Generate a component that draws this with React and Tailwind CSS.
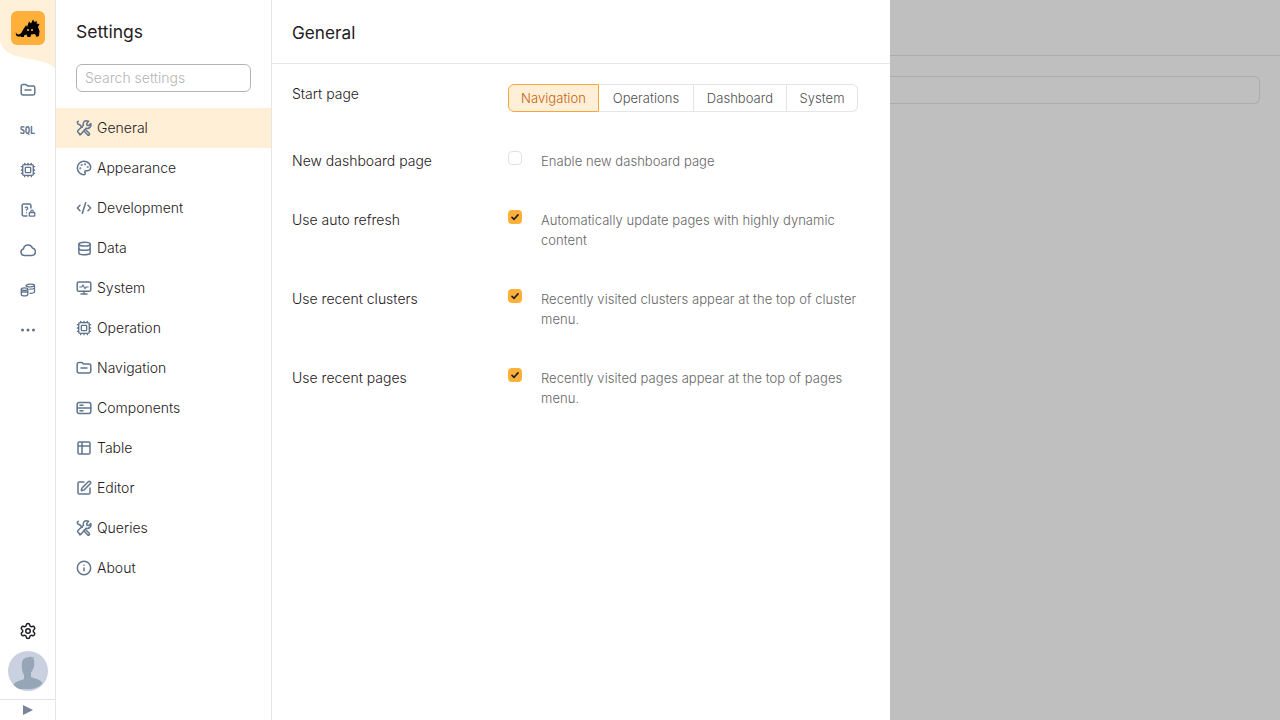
import React from "react";
import { Palette, CodeXml, Database, Cpu, Table2, SquarePen, Info, Settings } from "lucide-react";

const font = { fontFamily: '"Inter", "Liberation Sans", sans-serif' };
const sw = 2.25;

function S({ children, size = 16, className = "" }) {
  return (
    <svg width={size} height={size} viewBox="0 0 16 16" fill="none" stroke="currentColor" strokeWidth="1.5" strokeLinecap="round" strokeLinejoin="round" className={className}>
      {children}
    </svg>
  );
}

const FolderI = () => (
  <S>
    <path d="M1.2 4.2c0-1 .8-1.7 1.7-1.7h2.6c.6 0 1 .3 1.3.7l.5.7h5.8c1 0 1.7.7 1.7 1.7v5.7c0 1-.8 1.7-1.7 1.7H2.9c-1 0-1.7-.8-1.7-1.7z" />
    <path d="M5 8h6" />
  </S>
);
const ToolsI = () => (
  <S>
    <path d="M2.3 1.2 1.2 2.3l.8 2 1.6.3 2.6 2.6" />
    <path d="M4.500 14.600 2 12.200c-.5-.6-.5-1.200 0-1.700l5.400-5.300c-.3-1.500-.1-3 1-4C9.700.600 11.200.700 12.600 1.300L10.700 3.500l.3 1.800 1.700.3 2-2c.5 1.300.3 2.700-.8 3.800-1 1-2.500 1.200-3.900.9l-5.300 6.100c-.3.300-.700.500-1.200.200" />
    <path d="m9.700 9.700 3.500 3.500c.5.500.5 1.200 0 1.600-.5.400-1.100.400-1.600 0l-3.400-3.500" />
  </S>
);
const MonitorI = () => (
  <S>
    <rect x="1.200" y="2" width="13.600" height="9.300" rx="1.600" />
    <path d="M8 11.300V14M5 14h6" />
    <path d="M3.700 7h2l1.200-2 2 3.500L10.200 7h2" strokeWidth="1.200" />
  </S>
);
const ComponentsI = () => (
  <S>
    <rect x="1.200" y="2.500" width="13.600" height="11" rx="2" />
    <path d="M1.200 8h13.600M4 5.300h3M4 10.800h3" />
  </S>
);
const FileLockI = () => (
  <S>
    <path d="M7 14H3.800c-.9 0-1.600-.7-1.600-1.600V3.600C2.200 2.700 2.900 2 3.800 2h5.500c.9 0 1.600.7 1.600 1.600V6" />
    <path d="M5.300 5.500c.7-.7 2.400-.4 2.400.8 0 .8-1.100 1-1.300 1.700M6.400 10.600v.2" strokeWidth="1.300" />
    <rect x="9.300" y="10.500" width="5.500" height="3.700" rx=".8" strokeWidth="1.300" />
    <path d="M10.800 10.300V9.200c0-1.500 2.500-1.500 2.500 0v1.100" strokeWidth="1.100" />
  </S>
);
const CloudI = () => (
  <S>
    <path d="M4.300 13.500a3.300 3.300 0 0 1-.8-6.500 4.600 4.600 0 0 1 8.900-1 3.800 3.800 0 0 1-.4 7.500z" />
  </S>
);
const DbsI = () => (
  <S>
    <path d="M1.300 7.200c0-1.800 6.500-1.800 6.500 0v5.300c0 1.900-6.500 1.900-6.500 0z" strokeWidth="1.300" />
    <path d="M1.300 7.200c0 1.500 6.500 1.500 6.500 0M1.300 10h6.500" strokeWidth="1.300" />
    <path d="M6 3.800c0-1.900 8.500-2.400 8.500-.5v6.500c0 .8-2.500 1.500-4.500 1.500M6 3.800c0 1.700 8.500 1.200 8.500-.5M9.800 7.200c2 0 3.600-.3 4.700-1" strokeWidth="1.300" />
  </S>
);
const DotsI = () => (
  <svg width="16" height="16" viewBox="0 0 16 16" fill="currentColor">
    <circle cx="2.500" cy="8" r="1.500" />
    <circle cx="8" cy="8" r="1.500" />
    <circle cx="13.500" cy="8" r="1.500" />
  </svg>
);

const railItems = [
  <FolderI key="a" />,
  <span key="b" className="pt-0.5 text-[10px] leading-none font-extrabold tracking-[-0.5px] scale-x-90" style={{ fontFamily: '"DejaVu Sans Mono", monospace' }}>SQL</span>,
  <Cpu key="c" size={16} strokeWidth={2} />,
  <FileLockI key="d" />,
  <CloudI key="e" />,
  <DbsI key="f" />,
  <DotsI key="g" />,
];

const nav = [
  ["General", <ToolsI />],
  ["Appearance", <Palette size={16} strokeWidth={sw} />],
  ["Development", <CodeXml size={16} strokeWidth={sw} />],
  ["Data", <Database size={15} strokeWidth={2.4} />],
  ["System", <MonitorI />],
  ["Operation", <Cpu size={16} strokeWidth={2} />],
  ["Navigation", <FolderI />],
  ["Components", <ComponentsI />],
  ["Table", <Table2 size={16} strokeWidth={sw} />],
  ["Editor", <SquarePen size={16} strokeWidth={sw} />],
  ["Queries", <ToolsI />],
  ["About", <Info size={16} strokeWidth={sw} />],
];

function Check({ on }) {
  return (
    <span className={on ? "flex h-[14px] w-[14px] items-center justify-center rounded-[4px] bg-[#ffb03b] text-[#1f2023]" : "block h-[14px] w-[14px] rounded-[4px] border border-[#e1e1e1] bg-white"}>
      {on && (
        <svg width="10" height="10" viewBox="0 0 10 10" fill="none" stroke="currentColor" strokeWidth="1.700" strokeLinecap="round" strokeLinejoin="round">
          <path d="M2 5.300 4.100 7.300 8 2.900" />
        </svg>
      )}
    </span>
  );
}

function Row({ label, on, children }) {
  return (
    <div className="flex">
      <div className="w-[216px] shrink-0 text-[14px] leading-5 text-[#1f2023]">{label}</div>
      <div className="shrink-0 w-[33px]"><Check on={on} /></div>
      <div className="w-[330px] text-[13px] leading-5 tracking-[0.05px] text-[#666666]">{children}</div>
    </div>
  );
}

export default function App() {
  return (
    <div className="flex h-screen w-[1280px] overflow-hidden bg-white font-light" style={font}>
      <aside className="relative flex w-14 shrink-0 flex-col items-center border-r border-[#e5e5e5] bg-white">
        <svg width="55" height="70" viewBox="0 0 55 70" className="absolute left-0 top-0">
          <path d="M0 0H55V68C46 60 30 60 16 56C6 53 0 47 0 38Z" fill="#fff0d9" />
        </svg>
        <div className="relative mt-[11px] h-[34px] w-[34px] rounded-[6px] bg-[#ffb03b]">
          <svg width="34" height="34" viewBox="0 0 34 34" className="block">
            <path fill="#000" d="M5 21C5 23 7 24 9 23 11 22 12 18 14 16L15 14 16 16 18 10.500 20 12.500 22 8.500 23.500 11 26 10 25.500 12.500 28.500 13 27 16 28.500 20 28 25 25.500 26 24 23 20 23.500 19.500 26 16.500 26 15.500 23.500 13 24.500 13 26 9.500 26 10 25C7 26.500 4 25 5 21Z" />
            <circle cx="17" cy="19" r="1.100" fill="#ffb03b" />
            <circle cx="21" cy="19" r="1.100" fill="#ffb03b" />
          </svg>
        </div>
        <div className="relative mt-[25px] flex flex-col items-center text-[#62758d]">
          {railItems.map((it, i) => (
            <div key={i} className="flex h-10 w-10 items-center justify-center">{it}</div>
          ))}
        </div>
        <div className="mt-auto flex h-10 items-center justify-center text-[#1f2023]">
          <Settings size={18} strokeWidth={2} />
        </div>
        <div className="h-10 w-10 overflow-hidden rounded-full bg-[#c9d0df]">
          <svg width="40" height="40" viewBox="0 0 40 40">
            <path fill="#96a5b8" d="M14 12c0-4 4-6 8-6l1-1 .5 1.500 3-.5-1.500 2 1.500 1-.5 2c1 4-1 8-3 10.500v4.500c3 1.500 9 2 11.500 6-3 4-8 6-14.500 6S8 39 5 34c2.500-4 8.500-4.500 11-6v-4c-2-3-2.500-7-2-12z" />
          </svg>
        </div>
        <div className="mt-2 flex h-[21px] w-full items-center justify-center border-t border-[#e5e5e5] text-[#78869a]">
          <svg width="10" height="10" viewBox="0 0 10 10" fill="currentColor"><path d="M0 0 10 5 0 10Z" /></svg>
        </div>
      </aside>

      <nav className="flex w-[216px] shrink-0 flex-col border-r border-[#e5e5e5] bg-white">
        <h2 className="px-5 pt-[20px] text-[17.5px] leading-[24px] font-normal text-[#1f2023]">Settings</h2>
        <div className="mx-5 mt-[20px] flex h-7 items-center rounded-[6px] border border-[#b4b4b4] px-2 pb-0.5 text-[14px] text-[#b5b5b5]">Search settings</div>
        <div className="mt-4 flex flex-col">
          {nav.map(([label, icon], i) => (
            <div key={label} className={"flex h-10 items-center gap-[5px] px-5 text-[14px] text-[#1f2023] " + (i === 0 ? "bg-[#ffefd6]" : "")}>
              <span className="flex h-4 w-4 items-center justify-center text-[#62758d]">{icon}</span>
              <span className="pb-0.5">{label}</span>
            </div>
          ))}
        </div>
      </nav>

      <main className="flex w-[618px] shrink-0 flex-col bg-white">
        <h1 className="flex h-16 shrink-0 items-center border-b border-[#e5e5e5] px-5 pt-0.5 text-[17.2px] font-normal text-[#1f2023]">General</h1>
        <div className="flex flex-col gap-[39px] px-5 pt-5">
          <div className="flex">
            <div className="w-[216px] shrink-0 text-[14px] leading-5 text-[#1f2023]">Start page</div>
            <div className="flex h-7 text-[13px] tracking-[0.05px] text-[#4f4f4f]">
              <span className="flex w-[91px] items-center justify-center rounded-l-[6px] border border-[#f5a83f] bg-[#ffefd6] pt-0.5 text-[#c2640f]">Navigation</span>
              <span className="flex w-[95px] items-center justify-center border-y border-r border-[#e5e5e5] pt-0.5">Operations</span>
              <span className="flex w-[93px] items-center justify-center border-y border-r border-[#e5e5e5] pt-0.5">Dashboard</span>
              <span className="flex w-[71px] items-center justify-center rounded-r-[6px] border-y border-r border-[#e5e5e5] pt-0.5">System</span>
            </div>
          </div>
          <Row label="New dashboard page">Enable new dashboard page</Row>
          <Row label="Use auto refresh" on>Automatically update pages with highly dynamic content</Row>
          <Row label="Use recent clusters" on>Recently visited clusters appear at the top of cluster menu.</Row>
          <Row label="Use recent pages" on>Recently visited pages appear at the top of pages menu.</Row>
        </div>
      </main>

      <section className="flex flex-1 flex-col bg-[#bfbfbf]">
        <div className="h-14 shrink-0 border-b border-[#adadad]" />
        <div className="mr-5 mt-5 h-7 rounded-r-[6px] border-y border-r border-[#adadad]" />
      </section>
    </div>
  );
}
